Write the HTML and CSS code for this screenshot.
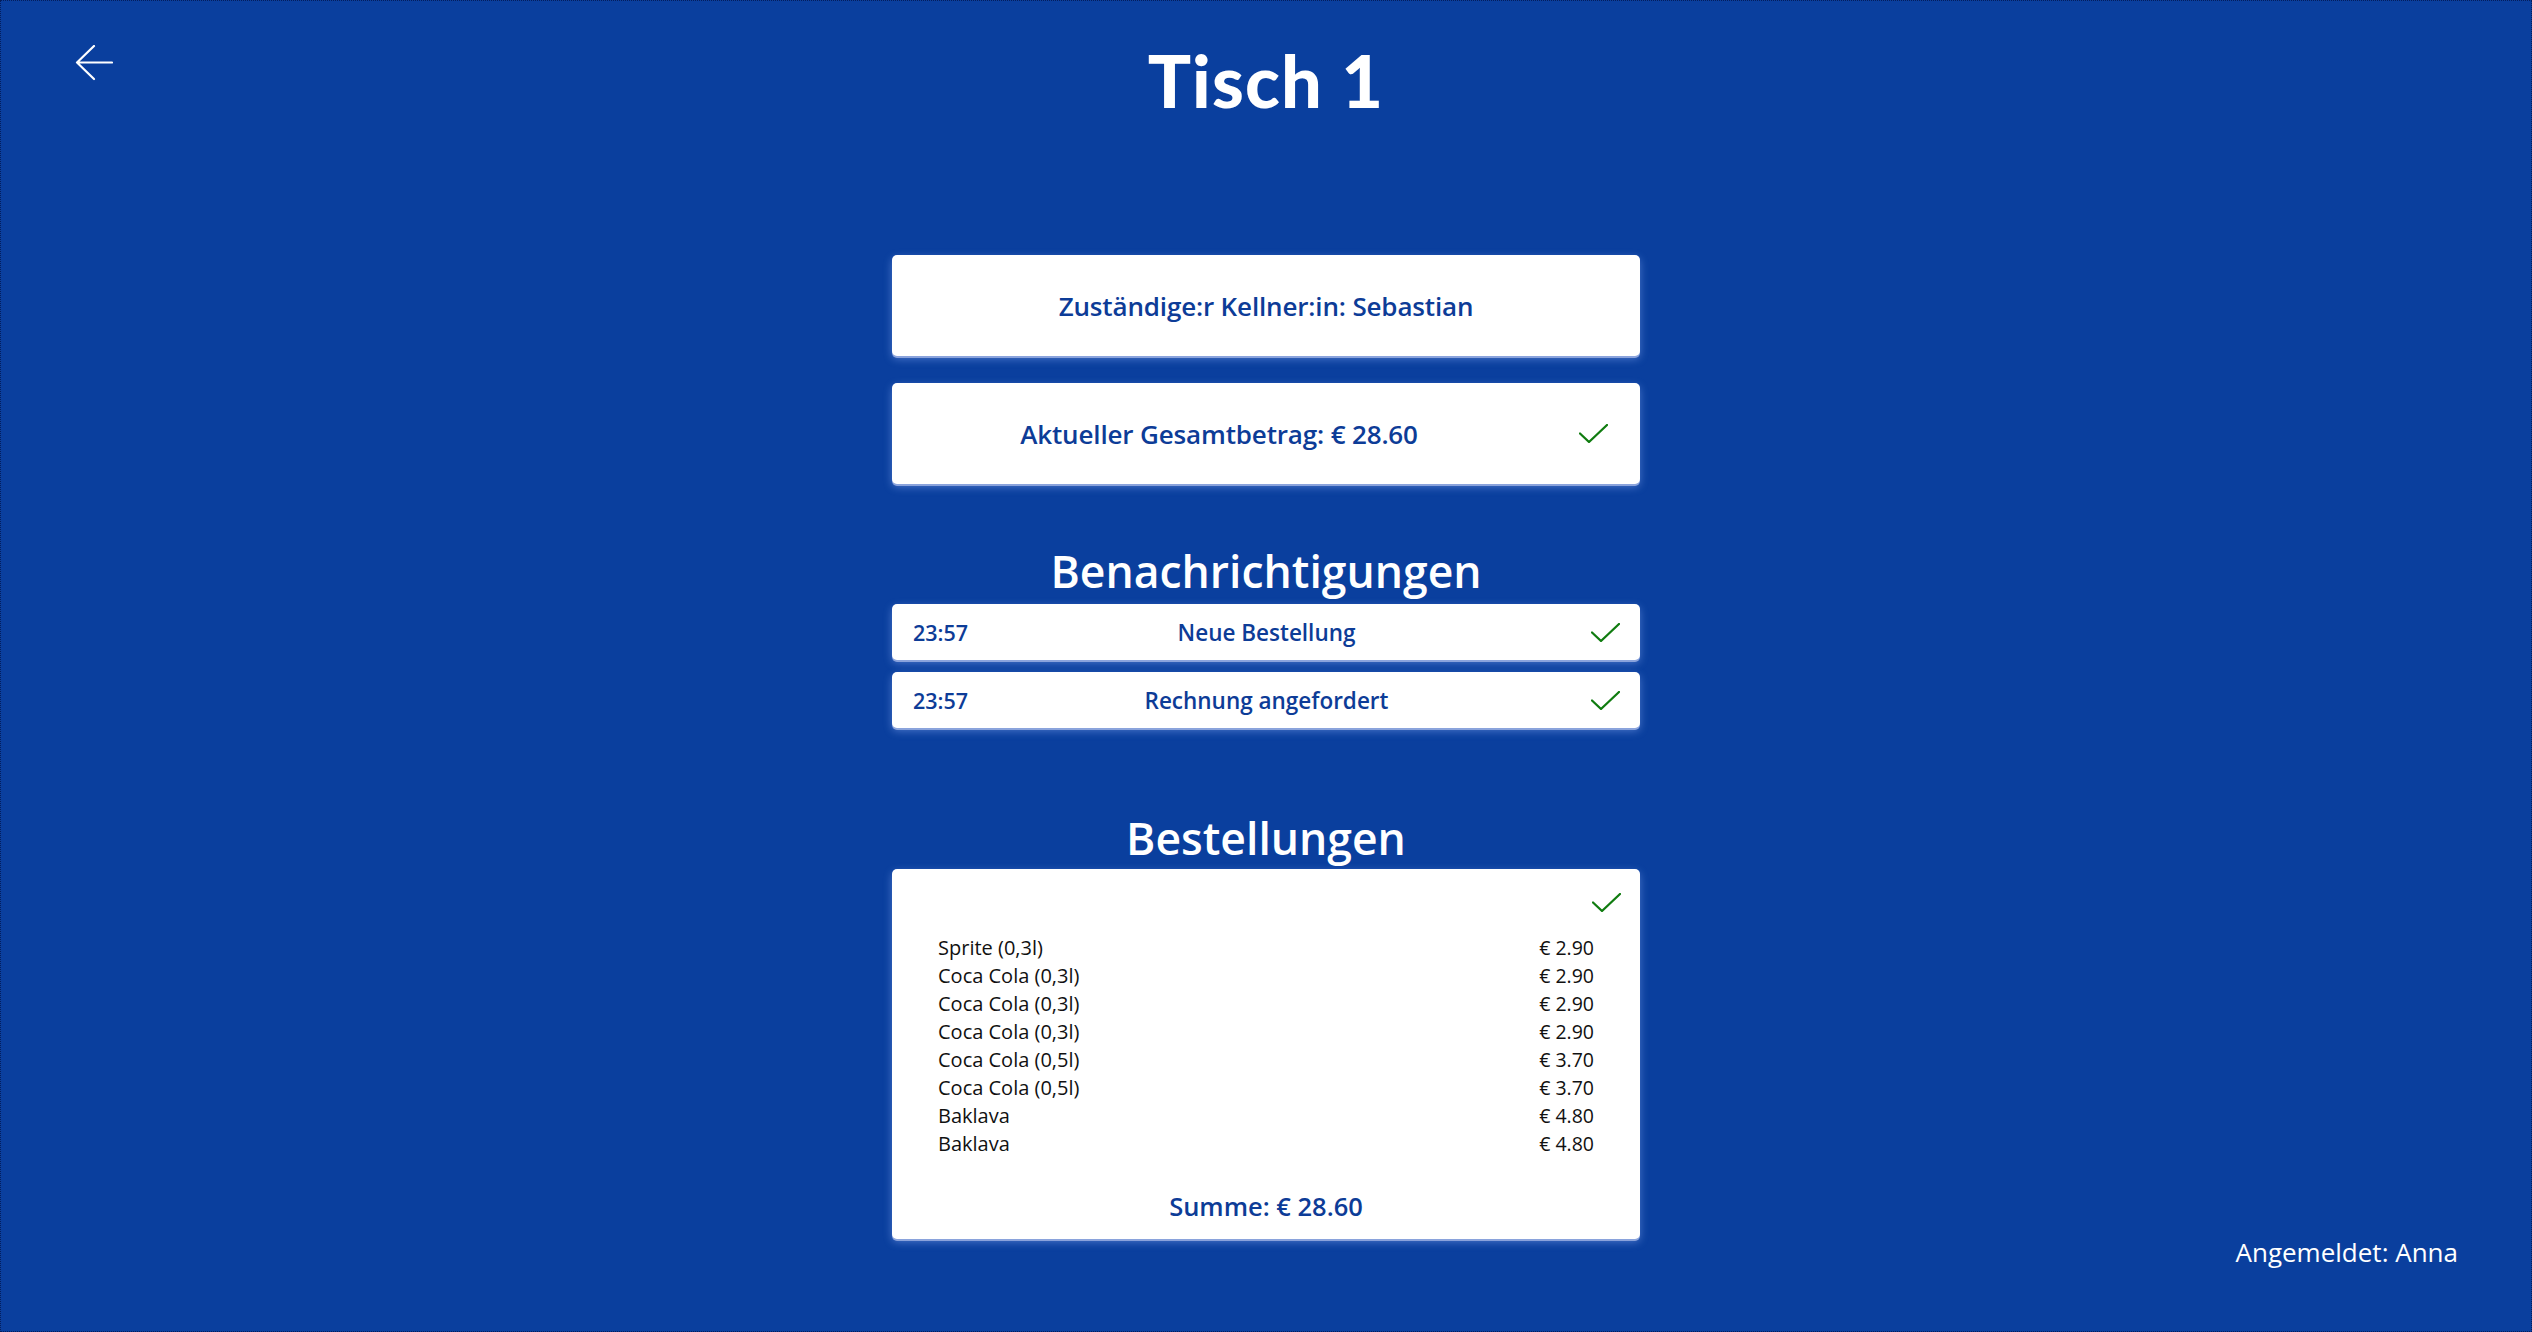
FILE: index.html
```html
<!DOCTYPE html>
<html lang="de">
<head>
<meta charset="utf-8">
<title>Tisch 1</title>
<link rel="stylesheet" href="styles.css">
</head>
<body>
<div class="page">
  <header class="header">
    <div class="back">
      <svg width="38" height="36" viewBox="0 0 38 36" fill="none" stroke="#fff" stroke-width="2.2" stroke-linecap="round" stroke-linejoin="round"><path d="M19 1 L2 17.5 L19 34 M2 17.5 H37"/></svg>
    </div>
    <h1 class="title">Tisch 1</h1>
    <div></div>
  </header>

  <main class="column">
    <section class="card info">
      <span class="info-text">Zuständige:r Kellner:in: Sebastian</span>
    </section>
    <section class="card info total">
      <span class="info-text">Aktueller Gesamtbetrag: € 28.60</span>
      <span class="check-cell">
        <svg class="check" width="29" height="19" viewBox="0 0 29 19"><path d="M1 9.5 L10 18 L28 1"/></svg>
      </span>
    </section>

    <h2 class="heading notif-heading">Benachrichtigungen</h2>
    <div class="notif-list">
      <div class="card notif">
        <span class="time">23:57</span>
        <span class="notif-text">Neue Bestellung</span>
        <svg class="check" width="29" height="19" viewBox="0 0 29 19"><path d="M1 9.5 L10 18 L28 1"/></svg>
      </div>
      <div class="card notif">
        <span class="time">23:57</span>
        <span class="notif-text">Rechnung angefordert</span>
        <svg class="check" width="29" height="19" viewBox="0 0 29 19"><path d="M1 9.5 L10 18 L28 1"/></svg>
      </div>
    </div>

    <h2 class="heading order-heading">Bestellungen</h2>
    <section class="card orders">
      <div class="orders-top">
        <svg class="check" width="29" height="19" viewBox="0 0 29 19"><path d="M1 9.5 L10 18 L28 1"/></svg>
      </div>
      <ul class="items">
        <li><span>Sprite (0,3l)</span><span>€ 2.90</span></li>
        <li><span>Coca Cola (0,3l)</span><span>€ 2.90</span></li>
        <li><span>Coca Cola (0,3l)</span><span>€ 2.90</span></li>
        <li><span>Coca Cola (0,3l)</span><span>€ 2.90</span></li>
        <li><span>Coca Cola (0,5l)</span><span>€ 3.70</span></li>
        <li><span>Coca Cola (0,5l)</span><span>€ 3.70</span></li>
        <li><span>Baklava</span><span>€ 4.80</span></li>
        <li><span>Baklava</span><span>€ 4.80</span></li>
      </ul>
      <div class="sum">Summe: € 28.60</div>
    </section>
  </main>

  <footer class="footer">Angemeldet: Anna</footer>
</div>
</body>
</html>
```

FILE: styles.css
```css
html, body {
  margin: 0;
  padding: 0;
}

body {
  background: #0a3f9e;
  font-family: "Open Sans", "Noto Sans", sans-serif;
  color: #fff;
}

.page {
  width: 2532px;
  height: 1332px;
  box-sizing: border-box;
  outline: 1px dotted #041d5c;
  outline-offset: -1px;
  overflow: hidden;
}

.header {
  display: grid;
  grid-template-columns: 1fr auto 1fr;
  align-items: start;
  padding-top: 45px;
}

.back {
  padding-left: 75px;
  height: 36px;
}

.back svg {
  display: block;
}

.title {
  margin: 0;
  font-family: "Lato", "Open Sans", sans-serif;
  font-weight: 900;
  font-size: 72px;
  line-height: 71px;
  letter-spacing: 1.2px;
  color: #fff;
}

.column {
  width: 748px;
  margin: 139px auto 0;
  display: flex;
  flex-direction: column;
}

.card {
  background: #fff;
  border-radius: 5px;
  box-shadow: 0 2px 0 #8aa3dc, 0 3px 9px rgba(150, 185, 255, 0.45);
  color: #0d3c97;
  font-weight: 600;
}

.info {
  height: 101px;
  display: flex;
  align-items: center;
  justify-content: center;
  font-size: 26px;
  letter-spacing: -0.15px;
}

.total {
  margin-top: 27px;
  display: grid;
  grid-template-columns: 1fr 94px;
  align-items: center;
}

.info-text {
  text-align: center;
}

.check-cell {
  display: flex;
  justify-content: center;
}

.check {
  display: block;
  fill: none;
  stroke: #107c10;
  stroke-width: 2.3;
  stroke-linecap: round;
  stroke-linejoin: round;
}

.heading {
  margin: 0;
  text-align: center;
  font-size: 44.5px;
  line-height: 52px;
  font-weight: 600;
  color: #fff;
}

.notif-heading {
  margin-top: 61px;
}

.notif-list {
  margin-top: 7px;
  display: flex;
  flex-direction: column;
  gap: 12px;
}

.notif {
  height: 56px;
  display: grid;
  grid-template-columns: 1fr auto 1fr;
  align-items: center;
  padding: 0 20px 0 21px;
  font-size: 22.5px;
}

.notif .time {
  font-size: 21.5px;
}

.notif .check {
  justify-self: end;
}

.notif-text {
  text-align: center;
}

.order-heading {
  margin-top: 84px;
}

.orders {
  margin-top: 5px;
  height: 370px;
  box-sizing: border-box;
  display: flex;
  flex-direction: column;
}

.orders-top {
  display: flex;
  justify-content: flex-end;
  padding: 24px 19px 0 0;
}

.items {
  list-style: none;
  margin: 22px 0 0;
  padding: 0 46px;
  font-weight: 400;
  color: #111;
  font-size: 20px;
  line-height: 28px;
}

.items li {
  display: flex;
  justify-content: space-between;
}

.items li span:last-child {
  font-size: 19.5px;
}

.sum {
  margin-top: 31px;
  text-align: center;
  font-size: 25.5px;
  line-height: 34px;
}

.footer {
  display: flex;
  justify-content: flex-end;
  margin-top: -5px;
  padding-right: 74px;
  font-size: 26px;
  line-height: 36px;
  color: #fff;
}
```
